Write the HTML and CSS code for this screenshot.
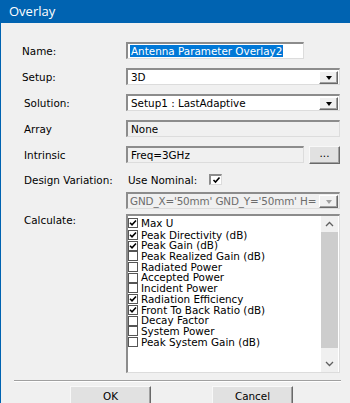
FILE: index.html
```html
<!DOCTYPE html>
<html lang="en">
<head>
    <meta charset="UTF-8">
    <meta name="viewport" content="width=device-width, initial-scale=1.0">
    <title>Overlay</title>
    <link rel="stylesheet" href="styles.css">
</head>
<body>

<div class="dialog">
    <div class="titlebar">Overlay</div>

    <div class="content">
        <div class="row first">
            <div class="lbl">Name:</div>
            <div class="box name-box"><span class="sel">Antenna Parameter Overlay2</span></div>
        </div>

        <div class="row">
            <div class="lbl">Setup:</div>
            <div class="box combo">
                <span class="val">3D</span>
                <span class="drop"></span>
            </div>
        </div>

        <div class="row">
            <div class="lbl indent">Solution:</div>
            <div class="box combo">
                <span class="val">Setup1 : LastAdaptive</span>
                <span class="drop"></span>
            </div>
        </div>

        <div class="row">
            <div class="lbl indent">Array</div>
            <div class="box combo readonly"><span class="val">None</span></div>
        </div>

        <div class="row">
            <div class="lbl indent">Intrinsic</div>
            <div class="box name-box readonly"><span class="val">Freq=3GHz</span></div>
            <div class="btn dots">...</div>
        </div>

        <div class="row nominal">
            <div class="lbl indent">Design Variation:</div>
            <span class="use-nom">Use Nominal:</span>
            <span class="nom-check">
                <svg width="9" height="8" viewBox="0 0 9 8"><polyline points="1.5,4 3.5,6 7.5,1.5" fill="none" stroke="#000" stroke-width="1.6"/></svg>
            </span>
        </div>

        <div class="row gnd">
            <div class="lbl"></div>
            <div class="box combo readonly disabled">
                <span class="val">GND_X='50mm' GND_Y='50mm' H=</span>
                <span class="drop"></span>
            </div>
        </div>

        <div class="row calc">
            <div class="lbl indent">Calculate:</div>
            <div class="box listbox">
                <div class="items">
                    <div class="item top"><span class="cb on"></span>Max U</div>
                    <div class="item"><span class="cb on"></span>Peak Directivity (dB)</div>
                    <div class="item"><span class="cb on"></span>Peak Gain (dB)</div>
                    <div class="item"><span class="cb"></span>Peak Realized Gain (dB)</div>
                    <div class="item"><span class="cb"></span>Radiated Power</div>
                    <div class="item"><span class="cb"></span>Accepted Power</div>
                    <div class="item"><span class="cb"></span>Incident Power</div>
                    <div class="item"><span class="cb on"></span>Radiation Efficiency</div>
                    <div class="item"><span class="cb on"></span>Front To Back Ratio (dB)</div>
                    <div class="item"><span class="cb"></span>Decay Factor</div>
                    <div class="item"><span class="cb"></span>System Power</div>
                    <div class="item"><span class="cb"></span>Peak System Gain (dB)</div>
                </div>
                <div class="scrollbar">
                    <div class="arrow">
                        <svg width="9" height="6" viewBox="0 0 9 6"><polyline points="1,5 4.5,1.5 8,5" fill="none" stroke="#606060" stroke-width="1.3"/></svg>
                    </div>
                    <div class="thumb"></div>
                    <div class="track"></div>
                    <div class="arrow">
                        <svg width="9" height="6" viewBox="0 0 9 6"><polyline points="1,1 4.5,4.5 8,1" fill="none" stroke="#606060" stroke-width="1.3"/></svg>
                    </div>
                </div>
            </div>
        </div>

        <div class="separator"></div>

        <div class="buttons">
            <div class="btn action">OK</div>
            <div class="btn action">Cancel</div>
        </div>
    </div>
</div>

</body>
</html>
```

FILE: styles.css
```css
body {
    margin: 0;
    background: #f0f0f0;
    font-family: "DejaVu Sans", Verdana, sans-serif;
    font-size: 10.4px;
    color: #000;
}
.dialog {
    width: 350px;
    height: 403px;
    overflow: hidden;
    border-left: 1px solid #0063b1;
    box-sizing: border-box;
}
.titlebar {
    height: 23px;
    line-height: 23px;
    background: #0063b1;
    color: #fff;
    font-family: "Open Sans", "Noto Sans", sans-serif;
    font-size: 13px;
    padding-left: 8px;
}
.row {
    display: flex;
    align-items: center;
    height: 17px;
    margin-top: 9px;
}
.row.first {
    margin-top: 19px;
}
.lbl {
    width: 125px;
    flex: none;
    padding-left: 21px;
    box-sizing: border-box;
    white-space: nowrap;
}
.lbl.indent {
    padding-left: 23px;
}
.box {
    box-sizing: border-box;
    height: 17px;
    border-style: solid;
    border-width: 2px 1px 1px 2px;
    border-color: #8c8c8c #dcdcdc #dcdcdc #8c8c8c;
    background: #fff;
    display: flex;
    align-items: center;
    padding-left: 2px;
    overflow: hidden;
    white-space: nowrap;
}
.name-box {
    width: 178px;
}
.combo {
    width: 214px;
}
.readonly {
    background: #f0f0f0;
}
.disabled .val {
    color: #6d6d6d;
    letter-spacing: -0.15px;
    padding-left: 0;
}
.sel {
    display: inline-block;
    background: #0078d7;
    color: #fff;
    line-height: 12px;
    padding: 0 1px;
}
.val {
    padding-left: 1px;
    line-height: 14px;
    overflow: hidden;
}
.drop {
    flex: none;
    margin-left: auto;
    margin-right: 1px;
    width: 19px;
    height: 13px;
    box-sizing: border-box;
    background: #f0f0f0;
    border: 1px solid;
    border-color: #fff #696969 #696969 #fff;
    box-shadow: inset -1px -1px #a0a0a0;
    display: flex;
    align-items: center;
    justify-content: center;
}
.drop::after {
    content: "";
    border-left: 3.5px solid transparent;
    border-right: 3.5px solid transparent;
    border-top: 4px solid #000;
    margin-top: 1px;
}
.disabled .drop::after {
    border-top-color: #a0a0a0;
}
.btn {
    box-sizing: border-box;
    background: #e1e1e1;
    border: 1px solid;
    border-color: #f8f8f8 #696969 #696969 #f8f8f8;
    box-shadow: inset -1px -1px #a0a0a0;
    display: flex;
    align-items: center;
    justify-content: center;
}
.dots {
    width: 31px;
    height: 18px;
    margin-left: 5px;
    padding-bottom: 3px;
}
.nominal {
    margin-top: 8px;
}
.use-nom {
    padding-left: 2px;
}
.nom-check {
    width: 13px;
    height: 11px;
    margin-left: 12px;
    box-sizing: border-box;
    background: #fff;
    border-style: solid;
    border-width: 2px 1px 1px 2px;
    border-color: #8c8c8c #dcdcdc #dcdcdc #8c8c8c;
    display: flex;
    align-items: center;
    justify-content: center;
}
.gnd {
    margin-top: 4px;
}
.calc {
    align-items: flex-start;
    height: 159px;
    margin-top: 5px;
}
.calc .lbl {
    line-height: 13px;
}
.listbox {
    width: 214px;
    height: 159px;
    padding-left: 0;
    align-items: stretch;
}
.items {
    flex: 1;
    padding-top: 1.5px;
}
.item {
    display: flex;
    align-items: center;
    height: 10.7px;
    line-height: 10.7px;
}
.item.top {
    margin-bottom: 1.5px;
}
.cb {
    flex: none;
    width: 10px;
    height: 10px;
    box-sizing: border-box;
    border: 1px solid #555;
    background: #fff;
    margin-right: 3px;
}
.cb.on {
    background: #fff url("data:image/svg+xml,%3Csvg xmlns='http://www.w3.org/2000/svg' width='8' height='8' viewBox='0 0 8 8'%3E%3Cpolyline points='1,3.8 3,5.8 7,1.5' fill='none' stroke='%23000' stroke-width='1.6'/%3E%3C/svg%3E") center no-repeat;
}
.scrollbar {
    flex: none;
    width: 17px;
    margin-right: 1px;
    background: #f0f0f0;
    display: flex;
    flex-direction: column;
}
.arrow {
    height: 16px;
    display: flex;
    align-items: center;
    justify-content: center;
}
.thumb {
    height: 116px;
    background: #cdcdcd;
}
.track {
    flex: 1;
}
.separator {
    margin: 7px 9px 0 13px;
    height: 1px;
    border-top: 1px solid #a0a0a0;
    background: #fff;
}
.buttons {
    display: flex;
    gap: 61px;
    margin-top: 4px;
    padding-left: 69px;
}
.action {
    width: 81px;
    height: 19px;
}
```
